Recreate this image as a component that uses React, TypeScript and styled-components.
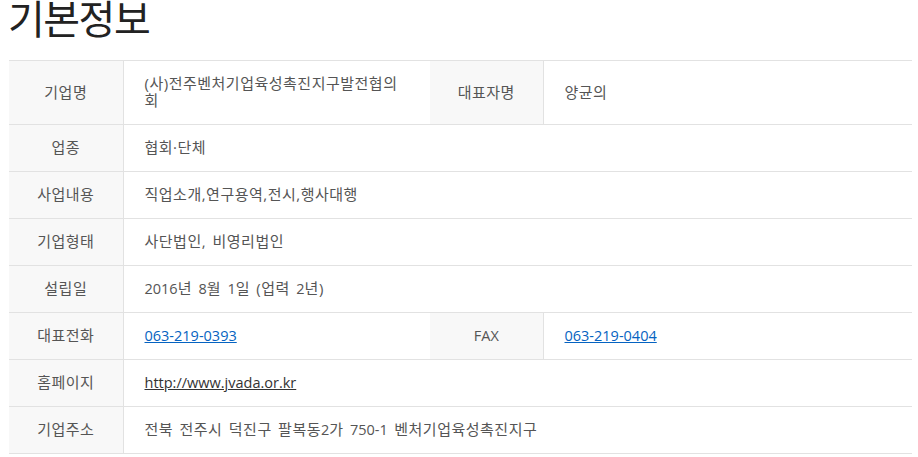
import React from "react";
import styled, { createGlobalStyle } from "styled-components";

const Global = createGlobalStyle`
  html, body { margin: 0; padding: 0; background: #fff; }
  body { font-family: "Open Sans", "Noto Sans CJK KR", sans-serif; }
`;

const Page = styled.div`
  padding: 0 6px 0 9px;
`;

const Title = styled.h2`
  margin: -3px 0 0 -1px;
  font-family: "Noto Sans CJK KR", sans-serif;
  font-size: 40px;
  line-height: 40px;
  font-weight: 400;
  color: #222;
  letter-spacing: -1.5px;
`;

const Table = styled.table`
  margin-top: 23px;
  width: 903px;
  border-collapse: collapse;
  table-layout: fixed;
  border-top: 1px solid #e2e2e2;
  font-family: "Open Sans", "Noto Sans CJK KR", sans-serif;
  font-size: 15px;
  line-height: 17px;
  letter-spacing: 0.5px;
  word-spacing: 2px;
`;

const Row = styled.tr`
  border-bottom: 1px solid #e2e2e2;
`;

const Head = styled.th`
  background: #f8f8f8;
  border-right: 1px solid #e2e2e2;
  color: #555;
  font-weight: 400;
  text-align: center;
  padding: 14px 6px 15px;
`;

const Cell = styled.td`
  color: #555;
  text-align: left;
  padding: 14px 20px 15px 21px;
  word-break: break-all;
`;

const Latin = styled.span`
  font-size: 14.5px;
  letter-spacing: 0;
`;

const Link = styled.a<{ $tone?: "blue" | "dark" }>`
  color: ${(p) => (p.$tone === "dark" ? "#333" : "#0563c1")};
  text-decoration: underline;
  font-size: 14.5px;
  letter-spacing: 0;
`;

export default function App() {
  return (
    <Page>
      <Global />
      <Title>기본정보</Title>
      <Table>
        <colgroup>
          <col style={{ width: 114 }} />
          <col style={{ width: 307 }} />
          <col style={{ width: 113 }} />
          <col style={{ width: 369 }} />
        </colgroup>
        <tbody>
          <Row>
            <Head>기업명</Head>
            <Cell>(사)전주벤처기업육성촉진지구발전협의회</Cell>
            <Head>대표자명</Head>
            <Cell>양균의</Cell>
          </Row>
          <Row>
            <Head>업종</Head>
            <Cell colSpan={3}>협회·단체</Cell>
          </Row>
          <Row>
            <Head>사업내용</Head>
            <Cell colSpan={3}>직업소개,연구용역,전시,행사대행</Cell>
          </Row>
          <Row>
            <Head>기업형태</Head>
            <Cell colSpan={3}>사단법인, 비영리법인</Cell>
          </Row>
          <Row>
            <Head>설립일</Head>
            <Cell colSpan={3}>
              <Latin>2016</Latin>년 <Latin>8</Latin>월 <Latin>1</Latin>일 (업력 <Latin>2</Latin>년)
            </Cell>
          </Row>
          <Row>
            <Head>대표전화</Head>
            <Cell>
              <Link href="#">063-219-0393</Link>
            </Cell>
            <Head>
              <Latin>FAX</Latin>
            </Head>
            <Cell>
              <Link href="#">063-219-0404</Link>
            </Cell>
          </Row>
          <Row>
            <Head>홈페이지</Head>
            <Cell colSpan={3}>
              <Link href="#" $tone="dark">http://www.jvada.or.kr</Link>
            </Cell>
          </Row>
          <Row>
            <Head>기업주소</Head>
            <Cell colSpan={3}>
              전북 전주시 덕진구 팔복동<Latin>2</Latin>가 <Latin>750-1</Latin> 벤처기업육성촉진지구
            </Cell>
          </Row>
        </tbody>
      </Table>
    </Page>
  );
}
